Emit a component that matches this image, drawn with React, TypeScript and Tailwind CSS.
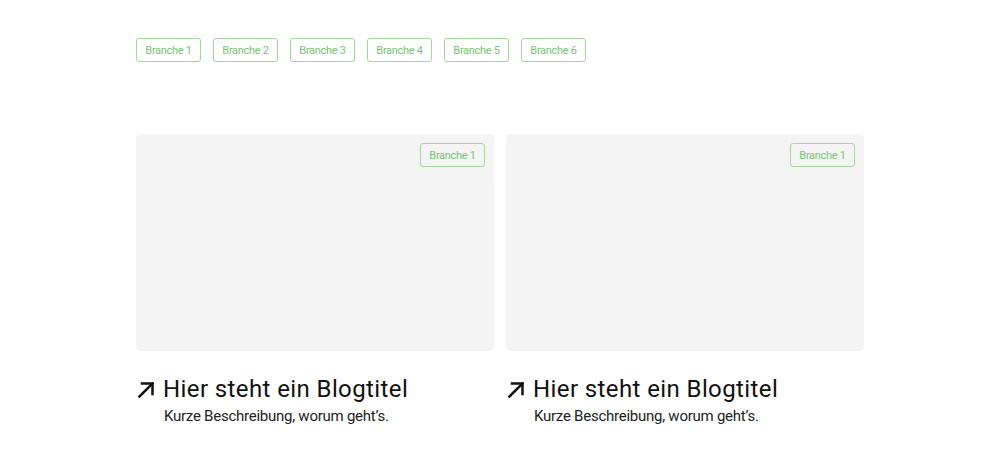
const tags = ['Branche 1', 'Branche 2', 'Branche 3', 'Branche 4', 'Branche 5', 'Branche 6'];

const posts = [
  { tag: 'Branche 1', title: 'Hier steht ein Blogtitel', text: "Kurze Beschreibung, worum geht’s." },
  { tag: 'Branche 1', title: 'Hier steht ein Blogtitel', text: "Kurze Beschreibung, worum geht’s." },
];

function Tag({ label }: { label: string }) {
  return (
    <span className="inline-flex h-6 w-[65px] items-center justify-center rounded-[3px] border border-[#a3d89d] text-[11px] leading-none tracking-[-0.3px] text-[#78c473]">
      {label}
    </span>
  );
}

function ArrowUpRight() {
  return (
    <svg width="19" height="19" viewBox="0 0 19 19" fill="none" stroke="#111" strokeWidth="2.5" strokeLinecap="square">
      <path d="M2.5 16.5L15.5 3.5" />
      <path d="M5 3.5H15.5V14" />
    </svg>
  );
}

export default function App() {
  return (
    <div className="min-h-[460px] bg-white" style={{ fontFamily: 'Roboto, "Noto Sans", sans-serif' }}>
      <div className="mx-auto w-[728px] pt-[38px]">
        <div className="flex gap-3">
          {tags.map((t) => (
            <Tag key={t} label={t} />
          ))}
        </div>

        <div className="mt-[72px] grid grid-cols-2 gap-3">
          {posts.map((p, i) => (
            <article key={i} className="flex flex-col">
              <div className="flex h-[217px] justify-end rounded-[4px] bg-[#f4f4f4] p-[9px]">
                <Tag label={p.tag} />
              </div>
              <div className="mt-[22px] flex items-center gap-[7px] pl-[1px]">
                <ArrowUpRight />
                <h2 className="text-[24px] leading-[32px] tracking-[0.4px] text-[#111]">{p.title}</h2>
              </div>
              <p className="pl-[28px] text-[15px] leading-[22px] tracking-[-0.25px] text-[#222]">{p.text}</p>
            </article>
          ))}
        </div>
      </div>
    </div>
  );
}
